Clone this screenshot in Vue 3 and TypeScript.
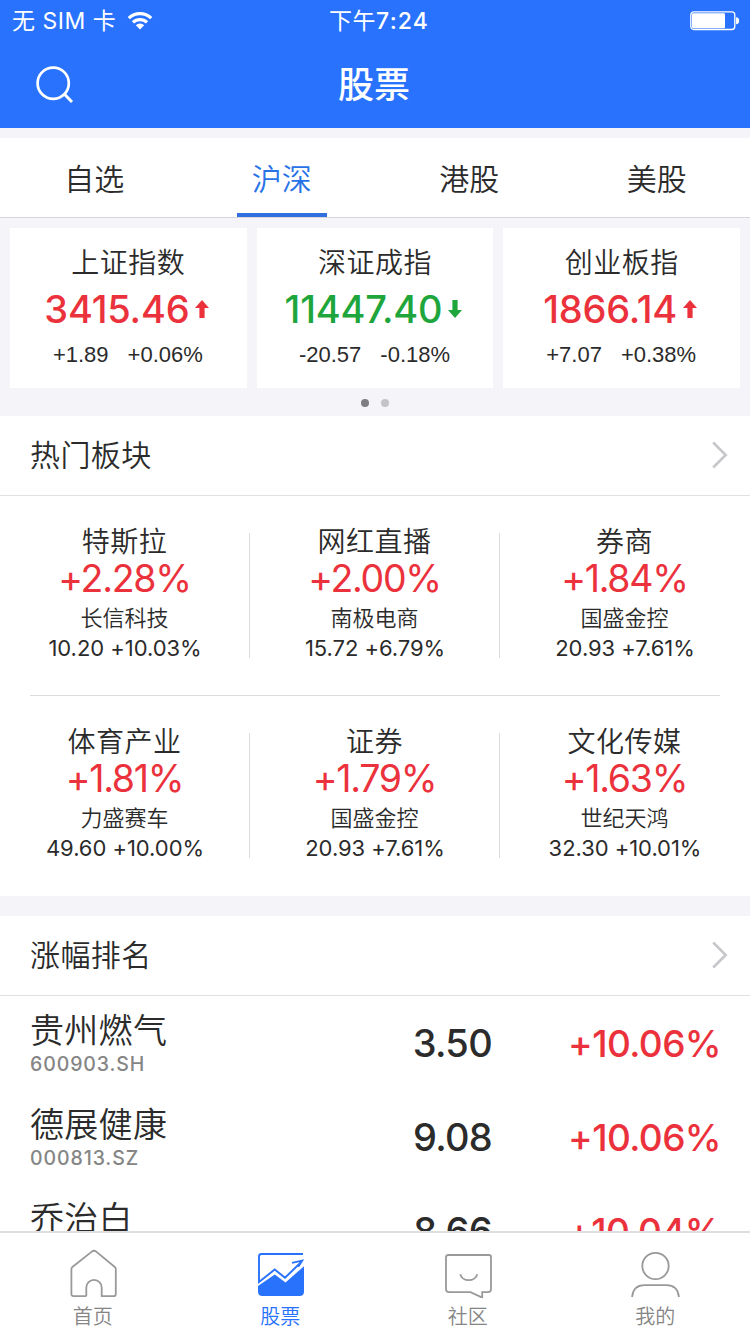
<script setup lang="ts">
interface IndexCard { name: string; value: string; change: string; rate: string; up: boolean }
interface Sector { name: string; rate: string; stock: string; detail: string }
interface Stock { name: string; code: string; price: string; rate: string }

const markets: string[] = ['自选', '沪深', '港股', '美股']
const activeMarket = '沪深'

const indexes: IndexCard[] = [
  { name: '上证指数', value: '3415.46', change: '+1.89', rate: '+0.06%', up: true },
  { name: '深证成指', value: '11447.40', change: '-20.57', rate: '-0.18%', up: false },
  { name: '创业板指', value: '1866.14', change: '+7.07', rate: '+0.38%', up: true },
]

const sectorRows: Sector[][] = [
  [
    { name: '特斯拉', rate: '+2.28%', stock: '长信科技', detail: '10.20 +10.03%' },
    { name: '网红直播', rate: '+2.00%', stock: '南极电商', detail: '15.72 +6.79%' },
    { name: '券商', rate: '+1.84%', stock: '国盛金控', detail: '20.93 +7.61%' },
  ],
  [
    { name: '体育产业', rate: '+1.81%', stock: '力盛赛车', detail: '49.60 +10.00%' },
    { name: '证券', rate: '+1.79%', stock: '国盛金控', detail: '20.93 +7.61%' },
    { name: '文化传媒', rate: '+1.63%', stock: '世纪天鸿', detail: '32.30 +10.01%' },
  ],
]

const stocks: Stock[] = [
  { name: '贵州燃气', code: '600903.SH', price: '3.50', rate: '+10.06%' },
  { name: '德展健康', code: '000813.SZ', price: '9.08', rate: '+10.06%' },
  { name: '乔治白', code: '', price: '8.66', rate: '+10.04%' },
]
</script>

<template>
  <div class="screen">
    <header class="top">
      <div class="status">
        <div class="carrier">
          <span>无 SIM 卡</span>
          <svg width="26" height="20" viewBox="0 0 26 20" fill="none" stroke="#fff" stroke-width="3.2">
            <path d="M1.8 7.2A16 16 0 0 1 24.2 7.2" />
            <path d="M6 11.4A10 10 0 0 1 20 11.4" />
            <path d="M8.8 14.3A6 6 0 0 1 17.2 14.3L13 18.6Z" fill="#fff" stroke="none" />
          </svg>
        </div>
        <div class="clock">下午<b>7:24</b></div>
        <svg class="battery" width="50" height="20" viewBox="0 0 50 20">
          <rect x="0.8" y="0.9" width="44" height="17.6" rx="3" fill="none" stroke="#fff" stroke-width="1.3" />
          <rect x="2" y="2.2" width="33" height="15" rx="1.2" fill="#fff" />
          <path d="M46 6.2Q49.2 6.4 49.2 9.7Q49.2 13 46 13.2Z" fill="#fff" />
        </svg>
      </div>
      <div class="titlebar">
        <svg class="search" width="40" height="40" viewBox="0 0 40 40" fill="none" stroke="#fff" stroke-width="2.7">
          <circle cx="18.2" cy="18.2" r="15.6" />
          <path d="M29 28.8L37 37" stroke-width="3" />
        </svg>
        <h1>股票</h1>
      </div>
    </header>

    <nav class="markets">
      <div v-for="m in markets" :key="m" class="market" :class="{ active: m === activeMarket }">
        <span>{{ m }}</span>
      </div>
    </nav>

    <section class="indexes">
      <div class="cards">
        <article v-for="i in indexes" :key="i.name" class="card">
          <div class="iname">{{ i.name }}</div>
          <div class="ivalue" :class="i.up ? 'up' : 'down'">
            <span>{{ i.value }}</span>
            <svg width="14" height="18" viewBox="0 0 14 18" fill="currentColor">
              <path v-if="i.up" d="M7 0L14 8H9.6V18H4.4V8H0Z" />
              <path v-else d="M7 18L14 10H9.6V0H4.4V10H0Z" />
            </svg>
          </div>
          <div class="ichange"><span>{{ i.change }}</span><span>{{ i.rate }}</span></div>
        </article>
      </div>
      <div class="dots"><i class="on"></i><i></i></div>
    </section>

    <section class="panel">
      <div class="heading">
        <h2>热门板块</h2>
        <svg width="16" height="28" viewBox="0 0 16 28" fill="none" stroke="#c7c7cc" stroke-width="2.6"><path d="M1.2 1.5L13.7 14L1.2 26.5" /></svg>
      </div>
      <div v-for="(row, r) in sectorRows" :key="r" class="sectors">
        <div v-for="s in row" :key="s.name" class="sector">
          <div class="sname">{{ s.name }}</div>
          <div class="srate">{{ s.rate }}</div>
          <div class="sstock">{{ s.stock }}</div>
          <div class="sdetail">{{ s.detail }}</div>
        </div>
      </div>
    </section>

    <section class="panel ranking">
      <div class="heading">
        <h2>涨幅排名</h2>
        <svg width="16" height="28" viewBox="0 0 16 28" fill="none" stroke="#c7c7cc" stroke-width="2.6"><path d="M1.2 1.5L13.7 14L1.2 26.5" /></svg>
      </div>
      <div v-for="s in stocks" :key="s.name" class="stock">
        <div>
          <div class="stname">{{ s.name }}</div>
          <div class="code">{{ s.code }}</div>
        </div>
        <div class="price">{{ s.price }}</div>
        <div class="rate">{{ s.rate }}</div>
      </div>
    </section>

    <footer class="tabs">
      <div class="tab">
        <svg width="50" height="50" viewBox="0 0 50 50" fill="none" stroke="#999" stroke-width="1.8">
          <path d="M17.3 48.2H4.6Q2.4 48.2 2.4 46V21Q2.4 19.8 3.4 19L22.8 3.6Q25 1.8 27.2 3.6L45.8 19Q46.8 19.8 46.8 21V46Q46.8 48.2 44.6 48.2H32.7V39.5A7.7 7.7 0 0 0 17.3 39.5V48.2" />
        </svg>
        <span>首页</span>
      </div>
      <div class="tab current">
        <svg width="50" height="50" viewBox="0 0 50 50" fill="none">
          <path d="M47 6H5.5Q3 6 3 8.5V34L18.7 21.5L29 29.7L45.5 13.8M36 14.9L46.2 12.6L42.2 18.8" stroke="#2872fc" stroke-width="1.9" />
          <path d="M2 38L18.8 26.5L29.500 34.600L48 18.200V43.500Q48 48 43.500 48H6.500Q2 48 2 43.500Z" fill="#2872fc" />
        </svg>
        <span>股票</span>
      </div>
      <div class="tab">
        <svg width="50" height="50" viewBox="0 0 50 50" fill="none" stroke="#999" stroke-width="1.8">
          <path d="M4.5 7H45Q47 7 47 9V41Q47 44.2 43.8 44.2H38.2V49.6L26.5 44.2H5.2Q2 44.2 2 41V9Q2 7 4.500 7Z" />
          <path d="M16.3 26.2A8.6 7.4 0 0 0 33.2 26.2" />
        </svg>
        <span>社区</span>
      </div>
      <div class="tab">
        <svg width="50" height="50" viewBox="0 0 50 50" fill="none" stroke="#999" stroke-width="1.8">
          <circle cx="24.500" cy="18" r="13.2" />
          <path d="M1.1 49Q2.3 37.2 13.5 37.2H35.5Q46.7 37.2 47.9 49" />
        </svg>
        <span>我的</span>
      </div>
    </footer>
  </div>
</template>

<style>
html, body { margin: 0; background: #f4f4f9; overflow: hidden; }
</style>

<style scoped>
.screen {
  width: 750px; height: 1334px; overflow: hidden; display: flex; flex-direction: column;
  background: #f4f4f9; color: #2b2b2b; font-family: Inter, "Noto Sans CJK SC", sans-serif;
}
h1, h2 { margin: 0; font-weight: 400; }
.top { flex: none; height: 128px; background: #2872fe; color: #fff; }
.status { height: 40px; display: grid; grid-template-columns: 1fr auto 1fr; align-items: center; font-size: 23px; line-height: 42px; }
.carrier { display: flex; align-items: center; gap: 11px; padding-left: 12px; font-weight: 380; letter-spacing: 0.5px; }
.clock { letter-spacing: 0.6px; padding-left: 8px; font-weight: 380; }
.clock b { font-weight: 500; letter-spacing: 1.2px; }
.battery { justify-self: end; margin-right: 10px; }
.titlebar { height: 88px; display: grid; grid-template-columns: 1fr auto 1fr; align-items: center; }
.search { margin: 0 0 1px 35px; }
h1 { font-size: 36px; line-height: 90px; font-weight: 500; margin-right: 2px; }
.markets { flex: none; box-sizing: border-box; height: 80px; margin-top: 10px; display: flex; background: #fff; border-bottom: 1px solid #d5d5dc; }
.market { flex: 1; display: flex; justify-content: center; font-size: 30px; line-height: 82px; font-weight: 350; }
.market span { box-sizing: border-box; width: 90px; height: 79px; text-align: center; margin-left: 1px; }
.active { color: #2872e8; }
.active span { border-bottom: 4px solid #3070de; }
.indexes { flex: none; box-sizing: border-box; height: 198px; padding: 10px 10px 0; }
.cards { display: flex; gap: 10px; height: 160px; }
.card { flex: 1; background: #fff; text-align: center; }
.iname { margin-top: 17px; font-size: 28px; line-height: 36px; letter-spacing: 0.5px; font-weight: 350; }
.ivalue { display: flex; justify-content: center; align-items: center; gap: 6px; margin-top: 5px; font-size: 38px; line-height: 46px; font-weight: 470; letter-spacing: -0.2px; padding-right: 3px; }
.up, .rate, .srate { color: #eb323c; }
.down { color: #1ea63c; }
.ichange { display: flex; justify-content: center; gap: 19px; margin: 8px 1px 0 0; font: 22px/30px "Liberation Sans", sans-serif; }
.dots { display: flex; justify-content: center; gap: 12px; margin-top: 11px; }
.dots i { width: 8px; height: 8px; border-radius: 50%; background: #c4c4c8; }
.dots .on { background: #7d7d82; }
.panel { flex: none; background: #fff; }
.heading { box-sizing: border-box; height: 80px; display: flex; align-items: center; justify-content: space-between; padding: 0 22px 0 30px; border-bottom: 1px solid #e1e1e4; }
.heading svg { margin-bottom: 1px; }
h2 { font-size: 30px; line-height: 81px; letter-spacing: 0.4px; font-weight: 350; }
.sectors { display: flex; height: 199px; border-bottom: 1px solid transparent; }
.sectors:nth-child(2) { background: linear-gradient(#dcdcdf, #dcdcdf) 30px 199px / 690px 1px no-repeat border-box; }
.sector { width: 250px; height: 125px; margin-top: 37px; text-align: center; box-sizing: border-box; border-right: 1px solid #dcdcdf; white-space: nowrap; }
.sector:last-child { border-right-color: transparent; }
.sname { font-size: 28px; line-height: 36px; letter-spacing: 0.5px; margin-top: -9px; font-weight: 350; }
.srate { font-size: 37.5px; line-height: 40px; margin-top: -1px; letter-spacing: -1.3px; font-weight: 370; }
.sstock { font-size: 22px; line-height: 30px; margin-top: 4px; font-weight: 350; }
.sdetail { font-size: 22px; line-height: 30px; font-weight: 380; padding-left: 1px; letter-spacing: -0.05px; }
.ranking { margin-top: 20px; height: 315px; overflow: hidden; }
.stock { height: 94px; display: grid; grid-template-columns: 282px 180px 1fr; align-items: center; padding: 0 30px; }
.stname { font-size: 34px; line-height: 42px; margin-top: 1px; letter-spacing: 0.3px; font-weight: 350; }
.code { font-size: 19.5px; line-height: 26px; height: 26px; margin-top: -1px; letter-spacing: 0.9px; color: #858585; font-weight: 450; }
.price { font-size: 38px; font-weight: 480; text-align: right; letter-spacing: -0.7px; }
.rate { font-size: 37px; font-weight: 460; text-align: right; letter-spacing: -0.6px; padding-top: 1px; margin-right: -1px; }
.tabs { flex: none; box-sizing: border-box; height: 103px; display: flex; background: #fff; border-top: 2px solid #dfdfe2; }
.tab { flex: 1; display: flex; flex-direction: column; align-items: center; color: #858585; font-size: 20px; padding-top: 15px; }
.tab span { line-height: 30px; margin-top: 4px; font-weight: 350; margin-right: 2px; }
.tab.current { color: #2872fc; }
</style>
